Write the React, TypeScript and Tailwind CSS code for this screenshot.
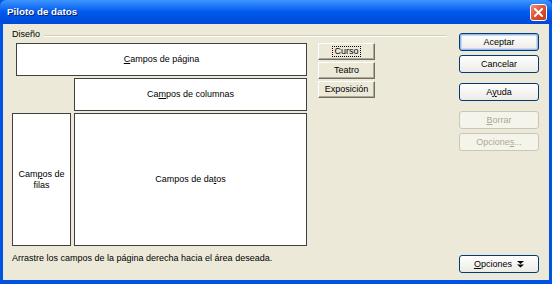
import React from 'react'

const font = { fontFamily: '"Liberation Sans", Arial, sans-serif' }

function U({ children }: { children: React.ReactNode }) {
  return <span className="underline underline-offset-1">{children}</span>
}

function ClassicButton({ children, focused }: { children: React.ReactNode; focused?: boolean }) {
  return (
    <button className="h-[17px] w-[57px] flex items-center justify-center bg-[#ECE9D8] border border-t-white border-l-white border-r-[#716F64] border-b-[#716F64] shadow-[inset_-1px_-1px_0_#ACA899] text-[9px] text-black leading-none">
      <span className={focused ? 'px-[1px] outline outline-1 outline-dotted outline-black' : ''}>{children}</span>
    </button>
  )
}

function XpButton({
  children,
  primary,
  disabled,
}: {
  children: React.ReactNode
  primary?: boolean
  disabled?: boolean
}) {
  return (
    <button
      className={`h-[18px] w-[80px] flex items-center justify-center rounded-[3px] border text-[9px] leading-none bg-gradient-to-b from-white to-[#ECEBE6]
        ${disabled ? 'border-[#C9C7BA] text-[#ACA899] bg-none bg-[#F5F4EA]' : 'border-[#003C74] text-black'}
        ${primary ? 'shadow-[inset_0_0_0_1px_#9DB9EB,inset_0_0_0_2px_#C8D9F5]' : ''}`}
    >
      {children}
    </button>
  )
}

function Box({ children, className }: { children: React.ReactNode; className: string }) {
  return (
    <div className={`bg-white border border-[#404040] flex items-center justify-center text-center text-[9px] leading-[11px] text-black ${className}`}>
      {children}
    </div>
  )
}

export default function App() {
  return (
    <div className="w-[552px] h-[284px] flex flex-col bg-[#0054E3]" style={font}>
      {/* title bar */}
      <div className="h-[24px] flex items-center justify-between pl-[7px] pr-[5px] rounded-t-[6px] bg-gradient-to-b from-[#3D95FF] via-[#0058EE] to-[#0049D6]">
        <span className="text-white font-bold text-[9.8px] [text-shadow:1px_1px_0_#0A246A]">Piloto de datos</span>
        <div className="w-[17px] h-[17px] rounded-[3px] border border-white bg-gradient-to-br from-[#F08C6E] via-[#E0522E] to-[#C43A17] flex items-center justify-center">
          <svg width="9" height="9" viewBox="0 0 9 9">
            <path d="M1 1 L8 8 M8 1 L1 8" stroke="white" strokeWidth="2" strokeLinecap="square" />
          </svg>
        </div>
      </div>

      {/* body */}
      <div className="flex-1 mx-[3px] mb-[4px] bg-[#ECE9D8] flex pl-[9px] pt-[4px] pr-[9px]">
        {/* left area */}
        <div className="w-[435px] flex flex-col">
          <div className="h-[14px] flex items-center gap-[4px] text-[9px] text-black">
            <span>Diseño</span>
            <div className="flex-1 h-[2px] border-t border-t-[#D0D0BF] border-b border-b-white mt-[1px]" />
          </div>
          <div className="flex mt-[1px] gap-[10px]">
            <div className="w-[296px] grid grid-cols-[59px_233px] grid-rows-[33px_33px_133px] gap-x-[3px] gap-y-[2px]">
              <Box className="col-span-2 ml-[4px]">
                <span><U>C</U>ampos de página</span>
              </Box>
              <div />
              <Box className="">
                <span>Ca<U>m</U>pos de columnas</span>
              </Box>
              <Box className="">
                <span>Cam<U>p</U>os de<br />filas</span>
              </Box>
              <Box className="">
                <span>Campos de da<U>t</U>os</span>
              </Box>
            </div>
            <div className="flex flex-col gap-[2px]">
              <ClassicButton focused>Curso</ClassicButton>
              <ClassicButton>Teatro</ClassicButton>
              <ClassicButton>Exposición</ClassicButton>
            </div>
          </div>
          <div className="mt-[6px] text-[9px] text-black">
            Arrastre los campos de la página derecha hacia el área deseada.
          </div>
        </div>

        {/* right buttons */}
        <div className="ml-[12px] mt-[5px] flex flex-col pb-[7px]">
          <XpButton primary>Aceptar</XpButton>
          <div className="mt-[4px]"><XpButton>Cancelar</XpButton></div>
          <div className="mt-[10px]"><XpButton>A<U>y</U>uda</XpButton></div>
          <div className="mt-[10px]"><XpButton disabled><U>B</U>orrar</XpButton></div>
          <div className="mt-[4px]"><XpButton disabled>Opcione<U>s</U>...</XpButton></div>
          <div className="mt-auto">
            <XpButton>
              <span className="flex items-center gap-[5px]">
                <span><U>O</U>pciones</span>
                <svg width="7" height="8" viewBox="0 0 7 8">
                  <path d="M0 1 L7 1 L3.5 4 Z M0 4.5 L7 4.5 L3.5 7.5 Z" fill="black" />
                </svg>
              </span>
            </XpButton>
          </div>
        </div>
      </div>
    </div>
  )
}
